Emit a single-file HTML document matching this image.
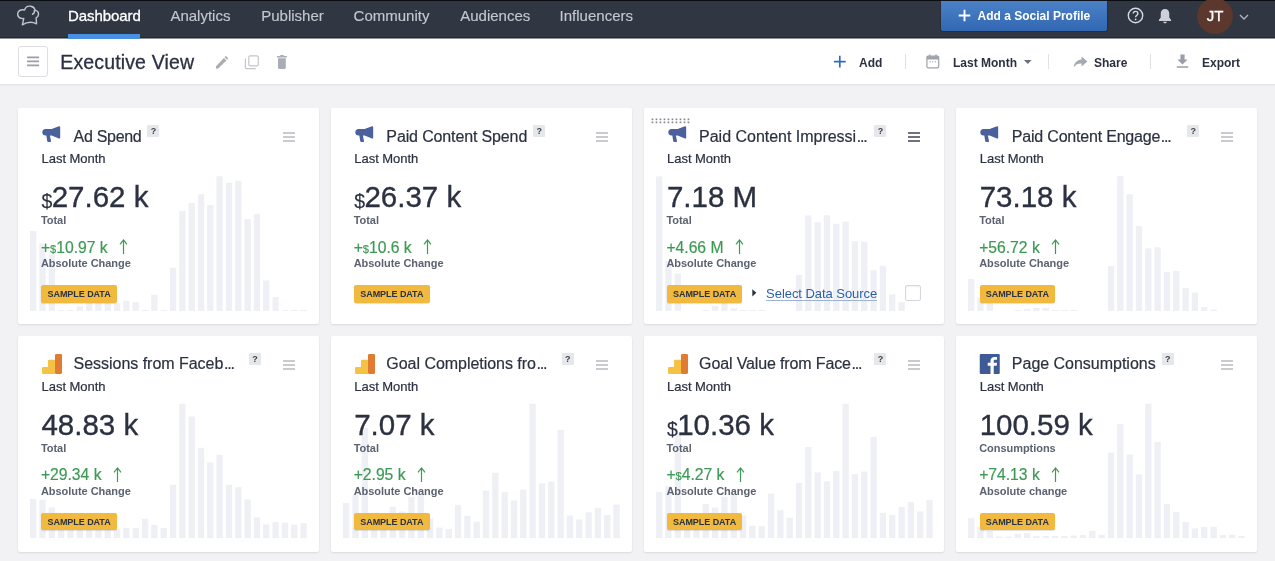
<!DOCTYPE html>
<html>
<head>
<meta charset="utf-8">
<title>Executive View</title>
<style>
*{box-sizing:border-box;margin:0;padding:0}
html,body{width:1275px;height:561px;overflow:hidden}
body{background:#f2f2f4;font-family:"Liberation Sans",sans-serif;color:#2b3140;position:relative}
.nav{position:absolute;left:0;top:0;width:1275px;height:38px;background:#303642;border-top:1px solid #0c0d10;border-bottom:1px solid #222734;box-shadow:0 1px 0 rgba(34,39,52,0.5);z-index:2}
.nav .it{position:absolute;top:5.6px;font-size:15px;color:#c3c7cf;white-space:nowrap;line-height:18px;letter-spacing:0;-webkit-text-stroke:0.15px #c3c7cf}
.nav .it.on{color:#fff;-webkit-text-stroke:0.3px #fff;letter-spacing:-0.08px}
.nav .ul{position:absolute;left:68px;top:33px;width:72px;height:4.6px;background:#4a90e2}
.addp{position:absolute;left:941px;top:0px;width:166px;height:30px;background:linear-gradient(#4a81c6,#3268b3);box-shadow:0 0 0 1px rgba(20,30,50,0.35);border-radius:0 0 2px 2px;color:#fff;font-weight:bold;font-size:12px;line-height:30px;white-space:nowrap}
.addp span{position:absolute;left:36.6px;top:0}
.avatar{position:absolute;left:1197px;top:-3.5px;width:36px;height:36px;border-radius:50%;background:#5b372e;color:#fff;font-size:15px;line-height:36px;text-align:center;-webkit-text-stroke:0.3px #fff}
.tb{position:absolute;left:0;top:38px;width:1275px;height:47px;background:#fff;border-bottom:1px solid #e3e4e6;box-shadow:0 1px 0 #eaebed}
.hb{position:absolute;left:18px;top:8px;width:30px;height:31px;border:1px solid #dcdee2;border-radius:3px;background:#fff}
.hb i{position:absolute;left:8px;width:12px;height:1.6px;background:#9a9ea8}
.ttl{position:absolute;left:60.3px;top:10px;font-size:19.5px;line-height:28px;color:#2b3140;white-space:nowrap;letter-spacing:0.14px;-webkit-text-stroke:0.3px #2b3140}
.tbtn{position:absolute;top:16px;transform:translateY(0.55px);font-size:12px;font-weight:bold;color:#2b3140;line-height:16px;white-space:nowrap}
.sep{position:absolute;top:16px;width:1px;height:15px;background:#dfe1e4}
.card{position:absolute;width:300.75px;height:215.75px;background:#fff;border-radius:2px;box-shadow:0 1px 2px rgba(20,20,30,0.11);overflow:hidden}
.bars{position:absolute;left:12px;top:66.6px}
.ic{position:absolute}
.title{position:absolute;left:55.6px;top:18.5px;font-size:16px;line-height:20px;color:#2b3140;white-space:nowrap;-webkit-text-stroke:0.2px #2b3140}
.el{letter-spacing:-1.15px;margin-left:0.6px}
.tx{display:inline-block;width:169.3px;vertical-align:top}
.q{display:inline-block;vertical-align:top;margin-left:6px;margin-top:-1.3px;-webkit-text-stroke:0;width:12px;height:12px;background:#e6e7eb;color:#3b404d;font-size:9px;font-weight:bold;line-height:12.6px;text-align:center;border-radius:1px;letter-spacing:0}
.menu{position:absolute;left:264.8px;top:24.25px;width:12px;height:11px}
.menu i{display:block;height:2px;background:#c9cbd1;margin-bottom:2px}
.menu.dk i{background:#6e727f}
.sub{position:absolute;left:23.6px;top:43.2px;font-size:13px;line-height:16px;color:#2b3140;white-space:nowrap;letter-spacing:-0.04px;-webkit-text-stroke:0.2px #2b3140}
.val{position:absolute;left:23.4px;top:73.3px;font-size:29.5px;line-height:32px;color:#2b3140;white-space:nowrap;-webkit-text-stroke:0.35px #2b3140}
.val .d{font-size:19.5px;position:relative;top:0.7px;-webkit-text-stroke:0.15px #2b3140;letter-spacing:-0.6px}
.val .u{margin-left:0}
.lab{position:absolute;left:22.9px;letter-spacing:-0.04px;font-size:11px;font-weight:bold;line-height:12px;color:#5b6270;white-space:nowrap}
.chg{position:absolute;left:22.9px;top:129.5px;font-size:15.7px;line-height:20px;color:#3d9a54;white-space:nowrap;-webkit-text-stroke:0.2px #3d9a54}
.chg .cd{font-size:11px}
.arr{position:absolute;top:1.8px;margin-left:11.2px}
.badge{position:absolute;left:23.25px;top:177.3px;width:75.6px;height:17.4px;background:#f1b93e;border-radius:2px;color:#2b3140;font-size:9px;font-weight:bold;line-height:19.3px;text-align:center;letter-spacing:-0.05px;overflow:hidden;box-shadow:0 1px 1px rgba(0,0,0,0.12)}
.grip{position:absolute;left:7.5px;top:10px}
.tri{position:absolute;left:108px;top:181px}
.sds{position:absolute;left:122.6px;top:176.7px;font-size:13px;line-height:18px;color:#2b5fab;white-space:nowrap;letter-spacing:-0.05px;border-bottom:1px solid #9db3d6;height:16.2px}
.cb{position:absolute;left:261.5px;top:177.2px;width:16px;height:15.8px;border:1px solid #d4d7dc;border-radius:2px;background:#fff;box-shadow:inset 0 1px 2px rgba(0,0,0,0.06)}
#root{position:absolute;left:0;top:0;width:1275px;height:561px;will-change:transform;transform:translateZ(0)}
</style>
</head>
<body>
<div id="root">
<div class="nav">
<svg style="position:absolute;left:8px;top:-1px" width="48" height="42" viewBox="0 0 48 42"><path d="M14.2 25.1 L15.6 18.6 C11.5 19.2 8.9 16.6 9.4 13.4 C9.9 10.2 13.2 8.8 16.4 9.8 C17.6 6.6 20.4 5.4 23 6 C25.4 6.5 27 8.2 27.4 10.2 C29.6 10.4 31.2 12.2 30.8 14.6 C30.5 16.6 29.4 17.6 28.4 17.8 L28.8 24 C24 21.6 19 22 14.2 25.1 Z M24.6 14.2 C26 13.6 26.8 12 26.6 10.4" fill="none" stroke="#c1c4cb" stroke-width="1.5" stroke-linejoin="round" stroke-linecap="round" transform="translate(0.6 0.5) scale(0.97)"/></svg>
<div class="it on" style="left:68px">Dashboard</div>
<div class="it" style="left:170.4px">Analytics</div>
<div class="it" style="left:261.2px">Publisher</div>
<div class="it" style="left:353.6px">Community</div>
<div class="it" style="left:460.2px">Audiences</div>
<div class="it" style="left:559.6px">Influencers</div>
<div class="ul"></div>
<div class="addp"><svg style="position:absolute;left:17.3px;top:8.3px" width="13" height="13" viewBox="0 0 13 13"><path d="M6.5 0.7 V12.3 M0.7 6.5 H12.3" stroke="#fff" stroke-width="1.9"/></svg><span>Add a Social Profile</span></div>
<svg style="position:absolute;left:1126.6px;top:6.3px" width="17" height="17" viewBox="0 0 17 17"><circle cx="8.5" cy="8.5" r="7.2" fill="none" stroke="#d6d9df" stroke-width="1.4"/><path d="M6.2 6.6 C6.2 5.2 7.2 4.4 8.5 4.4 C9.9 4.4 10.9 5.2 10.9 6.5 C10.9 8.2 8.6 8.3 8.6 10.2" fill="none" stroke="#d6d9df" stroke-width="1.4"/><circle cx="8.6" cy="12.4" r="0.9" fill="#d6d9df"/></svg>
<svg style="position:absolute;left:1158px;top:6.5px" width="14" height="16" viewBox="0 0 14 16"><path d="M7 1 C9.6 1 11.3 2.9 11.3 5.6 V9.6 L13.1 12 V12.9 H0.9 V12 L2.7 9.6 V5.6 C2.7 2.9 4.4 1 7 1 Z M5.3 13.7 H8.7 C8.7 14.7 8 15.2 7 15.2 C6 15.2 5.3 14.7 5.3 13.7 Z" fill="#cdd0d8"/></svg>
<div class="avatar">JT</div>
<svg style="position:absolute;left:1239px;top:13px" width="10" height="6" viewBox="0 0 10 6"><path d="M1 1 L5 5 L9 1" fill="none" stroke="#aeb2bb" stroke-width="1.4"/></svg>
</div>
<div class="tb">
<div class="hb"><svg style="position:absolute;left:0;top:0" width="28" height="29" viewBox="0 0 28 29"><path d="M8.1 10.4 H20.1 M8.1 14.4 H20.1 M8.1 18.4 H20.1" stroke="#9a9ea8" stroke-width="1.7"/></svg></div>
<div class="ttl">Executive View</div>
<svg style="position:absolute;left:208px;top:10px" width="88" height="28" viewBox="0 0 88 28"><path d="M7.9 20.7 L8 18.3 L15.9 10 L18.4 12.5 L10.3 20.6 Z M16.6 9.2 L17.6 8.1 Q17.9 7.9 18.2 8.2 L20 10.1 Q20.2 10.5 19.9 10.8 L19 11.8 Z" fill="#a9adb6"/><rect x="40.8" y="7.8" width="9.5" height="10.1" rx="1.4" fill="none" stroke="#c3c6cd" stroke-width="1.2"/><path d="M37.4 10.4 V19.5 Q37.4 20.7 38.6 20.7 H47.8" fill="none" stroke="#c3c6cd" stroke-width="1.2"/><path d="M69 8.1 H72.1 V7.6 Q72.1 7.1 72.6 7.1 H75.4 Q75.9 7.1 75.9 7.6 V8.1 H78.9 V9.4 H69 Z M70 10.35 H77.8 V19.8 Q77.8 21 76.6 21 H71.2 Q70 21 70 19.8 Z" fill="#a9adb6"/></svg>
<svg style="position:absolute;left:833px;top:17px" width="14" height="14" viewBox="0 0 14 14"><path d="M6.8 0.8 V12.6 M0.9 6.7 H12.7" stroke="#2f6cc0" stroke-width="1.7"/></svg>
<div class="tbtn" style="left:859px">Add</div>
<div class="sep" style="left:904.5px"></div>
<svg style="position:absolute;left:926px;top:16px" width="14" height="15" viewBox="0 0 14 15"><rect x="0.9" y="2.2" width="11.8" height="11.6" rx="1.3" fill="#fff" stroke="#9ea2ab" stroke-width="1.2"/><path d="M0.9 3.2 Q0.9 2.2 1.9 2.2 H11.7 Q12.7 2.2 12.7 3.2 V5.4 H0.9 Z" fill="#9ea2ab"/><path d="M3.6 0.6 V2.4 M10 0.6 V2.4" stroke="#9ea2ab" stroke-width="1.4"/><path d="M3.6 7.8 H4.8 M6.2 7.8 H7.4 M8.8 7.8 H10" stroke="#9ea2ab" stroke-width="1.1"/></svg>
<div class="tbtn" style="left:953px">Last Month</div>
<svg style="position:absolute;left:1023.6px;top:21.5px" width="8" height="5" viewBox="0 0 8 5"><path d="M0 0 H7.6 L3.8 4.1 Z" fill="#6b7080"/></svg>
<div class="sep" style="left:1048px"></div>
<svg style="position:absolute;left:1073px;top:18px" width="15" height="12" viewBox="0 0 15 12"><path d="M8.6 0.6 L14.4 5.6 L8.6 10.6 V7.6 C5 7.4 2.4 8.6 0.6 11.4 C1.2 7 3.8 4 8.6 3.6 Z" fill="#a5a9b2"/></svg>
<div class="tbtn" style="left:1094px">Share</div>
<div class="sep" style="left:1150px"></div>
<svg style="position:absolute;left:1176px;top:16px" width="13" height="15" viewBox="0 0 13 15"><path d="M4.4 0.6 H8.6 V5.4 H11.6 L6.5 10.4 L1.4 5.4 H4.4 Z M0.8 12.2 H12.2 V13.8 H0.8 Z" fill="#9a9ea8"/></svg>
<div class="tbtn" style="left:1202px">Export</div>
</div>
<div class="card" style="left:18.0px;top:108px">
<svg class="bars" width="277" height="136" viewBox="0 0 277 136" fill="#eff0f5"><rect x="0.00" y="56.0" width="6.3" height="80.0"/><rect x="9.32" y="68.6" width="6.3" height="67.4"/><rect x="18.65" y="79.6" width="6.3" height="56.4"/><rect x="27.97" y="135.0" width="6.3" height="1.0"/><rect x="37.30" y="135.0" width="6.3" height="1.0"/><rect x="46.62" y="131.3" width="6.3" height="4.7"/><rect x="55.95" y="128.0" width="6.3" height="8.0"/><rect x="65.27" y="127.5" width="6.3" height="8.5"/><rect x="74.60" y="125.2" width="6.3" height="10.8"/><rect x="83.92" y="128.5" width="6.3" height="7.5"/><rect x="93.25" y="126.0" width="6.3" height="10.0"/><rect x="102.57" y="127.2" width="6.3" height="8.8"/><rect x="111.90" y="135.0" width="6.3" height="1.0"/><rect x="121.22" y="119.7" width="6.3" height="16.3"/><rect x="130.55" y="135.0" width="6.3" height="1.0"/><rect x="139.88" y="92.7" width="6.3" height="43.3"/><rect x="149.20" y="35.9" width="6.3" height="100.1"/><rect x="158.52" y="27.9" width="6.3" height="108.1"/><rect x="167.85" y="19.3" width="6.3" height="116.7"/><rect x="177.17" y="30.0" width="6.3" height="106.0"/><rect x="186.50" y="1.2" width="6.3" height="134.8"/><rect x="195.82" y="7.8" width="6.3" height="128.2"/><rect x="205.15" y="5.7" width="6.3" height="130.3"/><rect x="214.47" y="44.0" width="6.3" height="92.0"/><rect x="223.80" y="39.1" width="6.3" height="96.9"/><rect x="233.12" y="105.5" width="6.3" height="30.5"/><rect x="242.45" y="122.1" width="6.3" height="13.9"/><rect x="251.77" y="135.0" width="6.3" height="1.0"/><rect x="261.10" y="135.0" width="6.3" height="1.0"/><rect x="270.42" y="135.0" width="6.3" height="1.0"/></svg>
<svg class="ic" style="left:18px;top:12px" width="32" height="28" viewBox="0 0 32 28"><path d="M23 6.3 Q24.2 6.1 24.2 7.4 L24.2 17.6 Q24.2 18.9 23 18.6 L15.6 15.6 L13.9 15.6 L15 20.9 Q15.1 22.1 14 22.1 L12.4 22.1 Q11.4 22.1 11.2 21 L10.3 15.6 L9.6 15.6 Q6.3 15.4 6.3 12.3 Q6.3 9.2 9.6 9 L15.6 9 Z" fill="#4b619e"/></svg>
<div class="title"><span style="letter-spacing:-0.31px">Ad Spend</span><span class="q">?</span></div>
<div class="menu"><i></i><i></i><i></i></div>
<div class="sub">Last Month</div>
<div class="val"><span class="d">$</span>27.62 k</div>
<div class="lab" style="top:106px">Total</div>
<div class="chg">+<span class="cd">$</span>10.97 k<svg class="arr" width="9" height="16" viewBox="0 0 9 16"><path d="M4.5 15 V1.2 M1 5.4 L4.5 1 L8 5.4" fill="none" stroke="#3d9a54" stroke-width="1.2"/></svg></div>
<div class="lab" style="top:149px">Absolute Change</div>
<div class="badge">SAMPLE DATA</div>
</div>
<div class="card" style="left:330.75px;top:108px">
<svg class="ic" style="left:18px;top:12px" width="32" height="28" viewBox="0 0 32 28"><path d="M23 6.3 Q24.2 6.1 24.2 7.4 L24.2 17.6 Q24.2 18.9 23 18.6 L15.6 15.6 L13.9 15.6 L15 20.9 Q15.1 22.1 14 22.1 L12.4 22.1 Q11.4 22.1 11.2 21 L10.3 15.6 L9.6 15.6 Q6.3 15.4 6.3 12.3 Q6.3 9.2 9.6 9 L15.6 9 Z" fill="#4b619e"/></svg>
<div class="title"><span style="letter-spacing:-0.134px">Paid Content Spend</span><span class="q">?</span></div>
<div class="menu"><i></i><i></i><i></i></div>
<div class="sub">Last Month</div>
<div class="val"><span class="d">$</span>26.37 k</div>
<div class="lab" style="top:106px">Total</div>
<div class="chg">+<span class="cd">$</span>10.6 k<svg class="arr" width="9" height="16" viewBox="0 0 9 16"><path d="M4.5 15 V1.2 M1 5.4 L4.5 1 L8 5.4" fill="none" stroke="#3d9a54" stroke-width="1.2"/></svg></div>
<div class="lab" style="top:149px">Absolute Change</div>
<div class="badge">SAMPLE DATA</div>
</div>
<div class="card" style="left:643.5px;top:108px">
<svg class="bars" width="277" height="136" viewBox="0 0 277 136" fill="#eff0f5"><rect x="0.00" y="1.4" width="6.3" height="134.6"/><rect x="9.32" y="85.7" width="6.3" height="50.3"/><rect x="18.65" y="98.5" width="6.3" height="37.5"/><rect x="46.62" y="135.0" width="6.3" height="1.0"/><rect x="55.95" y="131.0" width="6.3" height="5.0"/><rect x="65.27" y="128.0" width="6.3" height="8.0"/><rect x="74.60" y="133.3" width="6.3" height="2.7"/><rect x="83.92" y="135.0" width="6.3" height="1.0"/><rect x="93.25" y="135.0" width="6.3" height="1.0"/><rect x="102.57" y="135.0" width="6.3" height="1.0"/><rect x="139.88" y="99.9" width="6.3" height="36.1"/><rect x="149.20" y="40.5" width="6.3" height="95.5"/><rect x="158.52" y="47.2" width="6.3" height="88.8"/><rect x="167.85" y="40.2" width="6.3" height="95.8"/><rect x="177.17" y="48.8" width="6.3" height="87.2"/><rect x="186.50" y="46.6" width="6.3" height="89.4"/><rect x="195.82" y="66.2" width="6.3" height="69.8"/><rect x="205.15" y="66.7" width="6.3" height="69.3"/><rect x="214.47" y="95.3" width="6.3" height="40.7"/><rect x="223.80" y="90.8" width="6.3" height="45.2"/><rect x="233.12" y="119.4" width="6.3" height="16.6"/><rect x="242.45" y="127.2" width="6.3" height="8.8"/></svg>
<svg class="grip" width="40" height="6" viewBox="0 0 40 6" fill="#85888f"><rect x="0.6" y="0.5" width="1.7" height="1.7"/><rect x="0.6" y="3.5" width="1.7" height="1.7"/><rect x="4.6" y="0.5" width="1.7" height="1.7"/><rect x="4.6" y="3.5" width="1.7" height="1.7"/><rect x="8.6" y="0.5" width="1.7" height="1.7"/><rect x="8.6" y="3.5" width="1.7" height="1.7"/><rect x="12.6" y="0.5" width="1.7" height="1.7"/><rect x="12.6" y="3.5" width="1.7" height="1.7"/><rect x="16.6" y="0.5" width="1.7" height="1.7"/><rect x="16.6" y="3.5" width="1.7" height="1.7"/><rect x="20.6" y="0.5" width="1.7" height="1.7"/><rect x="20.6" y="3.5" width="1.7" height="1.7"/><rect x="24.6" y="0.5" width="1.7" height="1.7"/><rect x="24.6" y="3.5" width="1.7" height="1.7"/><rect x="28.6" y="0.5" width="1.7" height="1.7"/><rect x="28.6" y="3.5" width="1.7" height="1.7"/><rect x="32.6" y="0.5" width="1.7" height="1.7"/><rect x="32.6" y="3.5" width="1.7" height="1.7"/><rect x="36.6" y="0.5" width="1.7" height="1.7"/><rect x="36.6" y="3.5" width="1.7" height="1.7"/></svg>
<svg class="ic" style="left:18px;top:12px" width="32" height="28" viewBox="0 0 32 28"><path d="M23 6.3 Q24.2 6.1 24.2 7.4 L24.2 17.6 Q24.2 18.9 23 18.6 L15.6 15.6 L13.9 15.6 L15 20.9 Q15.1 22.1 14 22.1 L12.4 22.1 Q11.4 22.1 11.2 21 L10.3 15.6 L9.6 15.6 Q6.3 15.4 6.3 12.3 Q6.3 9.2 9.6 9 L15.6 9 Z" fill="#4b619e"/></svg>
<div class="title"><span class="tx"><span style="letter-spacing:-0.02px">Paid Content Impressi</span><span class="el">...</span></span><span class="q">?</span></div>
<div class="menu dk"><i></i><i></i><i></i></div>
<div class="sub">Last Month</div>
<div class="val">7.18 M</div>
<div class="lab" style="top:106px">Total</div>
<div class="chg">+4.66 M<svg class="arr" width="9" height="16" viewBox="0 0 9 16"><path d="M4.5 15 V1.2 M1 5.4 L4.5 1 L8 5.4" fill="none" stroke="#3d9a54" stroke-width="1.2"/></svg></div>
<div class="lab" style="top:149px">Absolute Change</div>
<div class="badge">SAMPLE DATA</div>
<svg class="tri" width="6" height="8" viewBox="0 0 6 8"><path d="M0.3 0.3 L4.4 3.85 L0.3 7.4 Z" fill="#2b3140"/></svg><div class="sds">Select Data Source</div><div class="cb"></div>
</div>
<div class="card" style="left:956.25px;top:108px">
<svg class="bars" width="277" height="136" viewBox="0 0 277 136" fill="#eff0f5"><rect x="0.00" y="103.9" width="6.3" height="32.1"/><rect x="9.32" y="122.6" width="6.3" height="13.4"/><rect x="18.65" y="128.5" width="6.3" height="7.5"/><rect x="46.62" y="135.0" width="6.3" height="1.0"/><rect x="55.95" y="134.0" width="6.3" height="2.0"/><rect x="65.27" y="133.0" width="6.3" height="3.0"/><rect x="74.60" y="133.0" width="6.3" height="3.0"/><rect x="83.92" y="135.0" width="6.3" height="1.0"/><rect x="93.25" y="135.0" width="6.3" height="1.0"/><rect x="102.57" y="135.0" width="6.3" height="1.0"/><rect x="139.88" y="91.0" width="6.3" height="45.0"/><rect x="149.20" y="1.1" width="6.3" height="134.9"/><rect x="158.52" y="19.3" width="6.3" height="116.7"/><rect x="167.85" y="50.9" width="6.3" height="85.1"/><rect x="177.17" y="73.4" width="6.3" height="62.6"/><rect x="186.50" y="72.3" width="6.3" height="63.7"/><rect x="195.82" y="96.9" width="6.3" height="39.1"/><rect x="205.15" y="95.9" width="6.3" height="40.1"/><rect x="214.47" y="113.0" width="6.3" height="23.0"/><rect x="223.80" y="117.5" width="6.3" height="18.5"/><rect x="233.12" y="132.0" width="6.3" height="4.0"/><rect x="242.45" y="134.5" width="6.3" height="1.5"/></svg>
<svg class="ic" style="left:18px;top:12px" width="32" height="28" viewBox="0 0 32 28"><path d="M23 6.3 Q24.2 6.1 24.2 7.4 L24.2 17.6 Q24.2 18.9 23 18.6 L15.6 15.6 L13.9 15.6 L15 20.9 Q15.1 22.1 14 22.1 L12.4 22.1 Q11.4 22.1 11.2 21 L10.3 15.6 L9.6 15.6 Q6.3 15.4 6.3 12.3 Q6.3 9.2 9.6 9 L15.6 9 Z" fill="#4b619e"/></svg>
<div class="title"><span class="tx"><span style="letter-spacing:-0.2px">Paid Content Engage</span><span class="el">...</span></span><span class="q">?</span></div>
<div class="menu"><i></i><i></i><i></i></div>
<div class="sub">Last Month</div>
<div class="val">73.18 k</div>
<div class="lab" style="top:106px">Total</div>
<div class="chg">+56.72 k<svg class="arr" width="9" height="16" viewBox="0 0 9 16"><path d="M4.5 15 V1.2 M1 5.4 L4.5 1 L8 5.4" fill="none" stroke="#3d9a54" stroke-width="1.2"/></svg></div>
<div class="lab" style="top:149px">Absolute Change</div>
<div class="badge">SAMPLE DATA</div>
</div>
<div class="card" style="left:18.0px;top:335.75px">
<svg class="bars" width="277" height="136" viewBox="0 0 277 136" fill="#eff0f5"><rect x="0.00" y="96.9" width="6.3" height="39.1"/><rect x="9.32" y="97.7" width="6.3" height="38.3"/><rect x="18.65" y="105.5" width="6.3" height="30.5"/><rect x="27.97" y="124.0" width="6.3" height="12.0"/><rect x="37.30" y="124.0" width="6.3" height="12.0"/><rect x="46.62" y="124.0" width="6.3" height="12.0"/><rect x="55.95" y="124.0" width="6.3" height="12.0"/><rect x="65.27" y="124.0" width="6.3" height="12.0"/><rect x="74.60" y="124.0" width="6.3" height="12.0"/><rect x="83.92" y="127.0" width="6.3" height="9.0"/><rect x="93.25" y="126.1" width="6.3" height="9.9"/><rect x="102.57" y="126.1" width="6.3" height="9.9"/><rect x="111.90" y="116.7" width="6.3" height="19.3"/><rect x="121.22" y="122.9" width="6.3" height="13.1"/><rect x="130.55" y="126.0" width="6.3" height="10.0"/><rect x="139.88" y="82.8" width="6.3" height="53.2"/><rect x="149.20" y="1.7" width="6.3" height="134.3"/><rect x="158.52" y="14.5" width="6.3" height="121.5"/><rect x="167.85" y="45.8" width="6.3" height="90.2"/><rect x="177.17" y="60.5" width="6.3" height="75.5"/><rect x="186.50" y="52.8" width="6.3" height="83.2"/><rect x="195.82" y="82.8" width="6.3" height="53.2"/><rect x="205.15" y="85.2" width="6.3" height="50.8"/><rect x="214.47" y="97.5" width="6.3" height="38.5"/><rect x="223.80" y="115.4" width="6.3" height="20.6"/><rect x="233.12" y="122.4" width="6.3" height="13.6"/><rect x="242.45" y="119.9" width="6.3" height="16.1"/><rect x="251.77" y="120.7" width="6.3" height="15.3"/><rect x="261.10" y="122.6" width="6.3" height="13.4"/><rect x="270.42" y="121.3" width="6.3" height="14.7"/></svg>
<svg class="ic" style="left:18px;top:12px" width="32" height="28" viewBox="0 0 32 28"><path d="M7.2 19 H12 V12.95 Q12 11.75 13.2 11.75 H19.5 V25.9 H7.2 Q6 25.9 6 24.7 V20.2 Q6 19 7.2 19 Z" fill="#f5c243"/><rect x="19" y="5.9" width="7" height="20" rx="1.3" fill="#e07b31"/></svg>
<div class="title"><span class="tx"><span style="letter-spacing:-0.03px">Sessions from Faceb</span><span class="el">...</span></span><span class="q">?</span></div>
<div class="menu"><i></i><i></i><i></i></div>
<div class="sub">Last Month</div>
<div class="val">48.83 k</div>
<div class="lab" style="top:106px">Total</div>
<div class="chg">+29.34 k<svg class="arr" width="9" height="16" viewBox="0 0 9 16"><path d="M4.5 15 V1.2 M1 5.4 L4.5 1 L8 5.4" fill="none" stroke="#3d9a54" stroke-width="1.2"/></svg></div>
<div class="lab" style="top:149px">Absolute Change</div>
<div class="badge">SAMPLE DATA</div>
</div>
<div class="card" style="left:330.75px;top:335.75px">
<svg class="bars" width="277" height="136" viewBox="0 0 277 136" fill="#eff0f5"><rect x="0.00" y="101.0" width="6.3" height="35.0"/><rect x="9.32" y="92.7" width="6.3" height="43.3"/><rect x="18.65" y="26.0" width="6.3" height="110.0"/><rect x="27.97" y="121.0" width="6.3" height="15.0"/><rect x="37.30" y="121.0" width="6.3" height="15.0"/><rect x="46.62" y="104.7" width="6.3" height="31.3"/><rect x="55.95" y="109.5" width="6.3" height="26.5"/><rect x="65.27" y="94.8" width="6.3" height="41.2"/><rect x="74.60" y="92.7" width="6.3" height="43.3"/><rect x="83.92" y="116.2" width="6.3" height="19.8"/><rect x="93.25" y="125.6" width="6.3" height="10.4"/><rect x="102.57" y="126.9" width="6.3" height="9.1"/><rect x="111.90" y="102.8" width="6.3" height="33.2"/><rect x="121.22" y="113.8" width="6.3" height="22.2"/><rect x="130.55" y="119.7" width="6.3" height="16.3"/><rect x="139.88" y="88.6" width="6.3" height="47.4"/><rect x="149.20" y="70.7" width="6.3" height="65.3"/><rect x="158.52" y="90.2" width="6.3" height="45.8"/><rect x="167.85" y="98.5" width="6.3" height="37.5"/><rect x="177.17" y="87.6" width="6.3" height="48.4"/><rect x="186.50" y="1.7" width="6.3" height="134.3"/><rect x="195.82" y="81.4" width="6.3" height="54.6"/><rect x="205.15" y="79.5" width="6.3" height="56.5"/><rect x="214.47" y="27.9" width="6.3" height="108.1"/><rect x="223.80" y="113.5" width="6.3" height="22.5"/><rect x="233.12" y="117.5" width="6.3" height="18.5"/><rect x="242.45" y="110.3" width="6.3" height="25.7"/><rect x="251.77" y="106.0" width="6.3" height="30.0"/><rect x="261.10" y="113.0" width="6.3" height="23.0"/><rect x="270.42" y="102.6" width="6.3" height="33.4"/></svg>
<svg class="ic" style="left:18px;top:12px" width="32" height="28" viewBox="0 0 32 28"><path d="M7.2 19 H12 V12.95 Q12 11.75 13.2 11.75 H19.5 V25.9 H7.2 Q6 25.9 6 24.7 V20.2 Q6 19 7.2 19 Z" fill="#f5c243"/><rect x="19" y="5.9" width="7" height="20" rx="1.3" fill="#e07b31"/></svg>
<div class="title"><span class="tx"><span style="letter-spacing:-0.04px">Goal Completions fro</span><span class="el">...</span></span><span class="q">?</span></div>
<div class="menu"><i></i><i></i><i></i></div>
<div class="sub">Last Month</div>
<div class="val">7.07 k</div>
<div class="lab" style="top:106px">Total</div>
<div class="chg">+2.95 k<svg class="arr" width="9" height="16" viewBox="0 0 9 16"><path d="M4.5 15 V1.2 M1 5.4 L4.5 1 L8 5.4" fill="none" stroke="#3d9a54" stroke-width="1.2"/></svg></div>
<div class="lab" style="top:149px">Absolute Change</div>
<div class="badge">SAMPLE DATA</div>
</div>
<div class="card" style="left:643.5px;top:335.75px">
<svg class="bars" width="277" height="136" viewBox="0 0 277 136" fill="#eff0f5"><rect x="0.00" y="90.0" width="6.3" height="46.0"/><rect x="9.32" y="84.1" width="6.3" height="51.9"/><rect x="18.65" y="30.6" width="6.3" height="105.4"/><rect x="27.97" y="121.0" width="6.3" height="15.0"/><rect x="37.30" y="121.0" width="6.3" height="15.0"/><rect x="46.62" y="102.0" width="6.3" height="34.0"/><rect x="55.95" y="105.5" width="6.3" height="30.5"/><rect x="65.27" y="94.8" width="6.3" height="41.2"/><rect x="74.60" y="92.7" width="6.3" height="43.3"/><rect x="83.92" y="113.5" width="6.3" height="22.5"/><rect x="93.25" y="123.7" width="6.3" height="12.3"/><rect x="102.57" y="124.2" width="6.3" height="11.8"/><rect x="111.90" y="91.6" width="6.3" height="44.4"/><rect x="121.22" y="108.2" width="6.3" height="27.8"/><rect x="130.55" y="115.7" width="6.3" height="20.3"/><rect x="139.88" y="80.9" width="6.3" height="55.1"/><rect x="149.20" y="45.0" width="6.3" height="91.0"/><rect x="158.52" y="70.4" width="6.3" height="65.6"/><rect x="167.85" y="79.3" width="6.3" height="56.7"/><rect x="177.17" y="69.1" width="6.3" height="66.9"/><rect x="186.50" y="1.7" width="6.3" height="134.3"/><rect x="195.82" y="72.1" width="6.3" height="63.9"/><rect x="205.15" y="69.6" width="6.3" height="66.4"/><rect x="214.47" y="34.9" width="6.3" height="101.1"/><rect x="223.80" y="110.8" width="6.3" height="25.2"/><rect x="233.12" y="113.0" width="6.3" height="23.0"/><rect x="242.45" y="105.0" width="6.3" height="31.0"/><rect x="251.77" y="100.1" width="6.3" height="35.9"/><rect x="261.10" y="109.5" width="6.3" height="26.5"/><rect x="270.42" y="98.0" width="6.3" height="38.0"/></svg>
<svg class="ic" style="left:18px;top:12px" width="32" height="28" viewBox="0 0 32 28"><path d="M7.2 19 H12 V12.95 Q12 11.75 13.2 11.75 H19.5 V25.9 H7.2 Q6 25.9 6 24.7 V20.2 Q6 19 7.2 19 Z" fill="#f5c243"/><rect x="19" y="5.9" width="7" height="20" rx="1.3" fill="#e07b31"/></svg>
<div class="title"><span class="tx"><span style="letter-spacing:-0.137px">Goal Value from Face</span><span class="el">...</span></span><span class="q">?</span></div>
<div class="menu"><i></i><i></i><i></i></div>
<div class="sub">Last Month</div>
<div class="val"><span class="d">$</span>10.36 k</div>
<div class="lab" style="top:106px">Total</div>
<div class="chg">+<span class="cd">$</span>4.27 k<svg class="arr" width="9" height="16" viewBox="0 0 9 16"><path d="M4.5 15 V1.2 M1 5.4 L4.5 1 L8 5.4" fill="none" stroke="#3d9a54" stroke-width="1.2"/></svg></div>
<div class="lab" style="top:149px">Absolute Change</div>
<div class="badge">SAMPLE DATA</div>
</div>
<div class="card" style="left:956.25px;top:335.75px">
<svg class="bars" width="277" height="136" viewBox="0 0 277 136" fill="#eff0f5"><rect x="0.00" y="116.2" width="6.3" height="19.8"/><rect x="9.32" y="125.0" width="6.3" height="11.0"/><rect x="18.65" y="129.0" width="6.3" height="7.0"/><rect x="27.97" y="134.5" width="6.3" height="1.5"/><rect x="37.30" y="134.5" width="6.3" height="1.5"/><rect x="46.62" y="131.7" width="6.3" height="4.3"/><rect x="55.95" y="131.0" width="6.3" height="5.0"/><rect x="65.27" y="134.0" width="6.3" height="2.0"/><rect x="74.60" y="134.0" width="6.3" height="2.0"/><rect x="83.92" y="134.0" width="6.3" height="2.0"/><rect x="93.25" y="134.0" width="6.3" height="2.0"/><rect x="102.57" y="133.5" width="6.3" height="2.5"/><rect x="111.90" y="133.0" width="6.3" height="3.0"/><rect x="121.22" y="128.8" width="6.3" height="7.2"/><rect x="130.55" y="132.8" width="6.3" height="3.2"/><rect x="139.88" y="50.6" width="6.3" height="85.4"/><rect x="149.20" y="22.0" width="6.3" height="114.0"/><rect x="158.52" y="52.5" width="6.3" height="83.5"/><rect x="167.85" y="72.3" width="6.3" height="63.7"/><rect x="177.17" y="1.7" width="6.3" height="134.3"/><rect x="186.50" y="39.9" width="6.3" height="96.1"/><rect x="195.82" y="102.0" width="6.3" height="34.0"/><rect x="205.15" y="110.0" width="6.3" height="26.0"/><rect x="214.47" y="119.9" width="6.3" height="16.1"/><rect x="223.80" y="126.4" width="6.3" height="9.6"/><rect x="233.12" y="125.0" width="6.3" height="11.0"/><rect x="242.45" y="124.8" width="6.3" height="11.2"/><rect x="251.77" y="133.0" width="6.3" height="3.0"/><rect x="261.10" y="132.8" width="6.3" height="3.2"/><rect x="270.42" y="133.9" width="6.3" height="2.1"/></svg>
<svg class="ic" style="left:18px;top:12px" width="32" height="28" viewBox="0 0 32 28"><g transform="translate(5.75 5.9)"><rect width="20" height="20" rx="1" fill="#3f5b97"/><path d="M14 20 V11.85 H16.9 L17.3 8.85 H14 V7.2 C14 6.3 14.3 5.9 15.4 5.9 H17.3 V3.2 C16.8 3.1 15.9 3.05 15 3.05 C12.4 3.05 10.75 4.5 10.75 7 V8.85 H8 V11.85 H10.75 V20 Z" fill="#fff"/></g></svg>
<div class="title"><span style="letter-spacing:-0.017px">Page Consumptions</span><span class="q">?</span></div>
<div class="menu"><i></i><i></i><i></i></div>
<div class="sub">Last Month</div>
<div class="val">100.59 k</div>
<div class="lab" style="top:106px">Consumptions</div>
<div class="chg">+74.13 k<svg class="arr" width="9" height="16" viewBox="0 0 9 16"><path d="M4.5 15 V1.2 M1 5.4 L4.5 1 L8 5.4" fill="none" stroke="#3d9a54" stroke-width="1.2"/></svg></div>
<div class="lab" style="top:149px">Absolute change</div>
<div class="badge">SAMPLE DATA</div>
</div>
</div>
</body>
</html>
